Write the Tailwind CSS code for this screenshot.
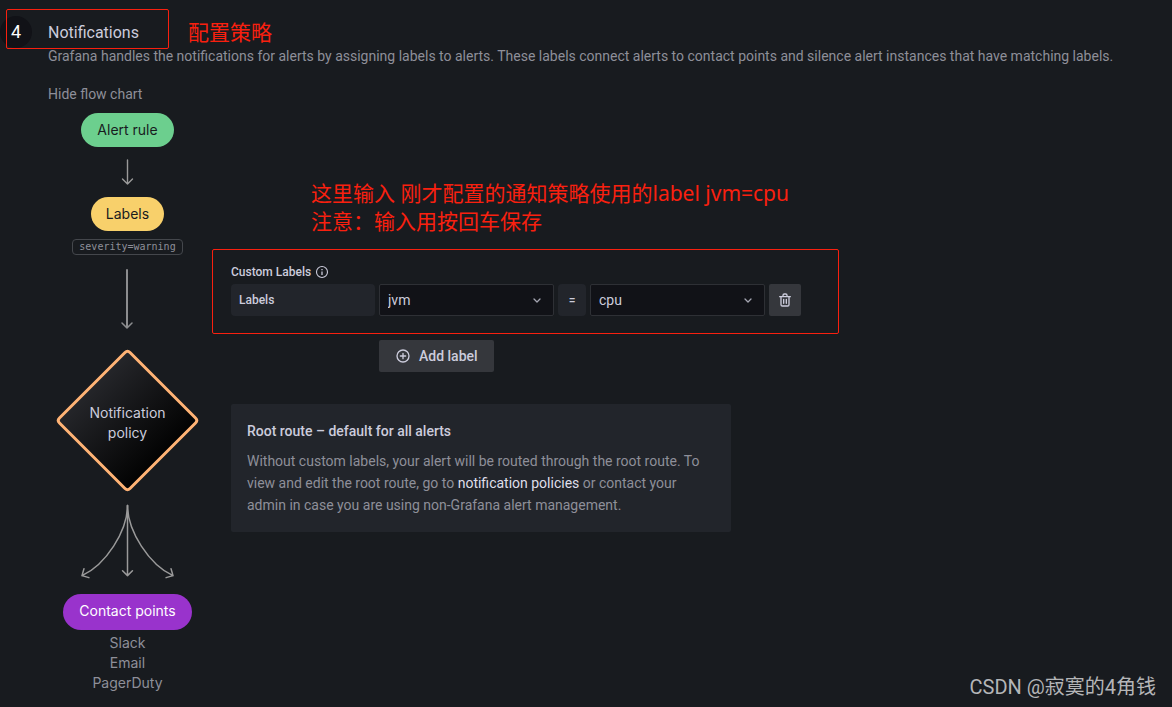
<!DOCTYPE html>
<html lang="en">
  <head>
    <meta charset="UTF-8">
    <meta name="viewport" content="width=device-width, initial-scale=1.0">
    <title>Alert rule - Notifications</title>
    <script src="https://cdn.jsdelivr.net/npm/@tailwindcss/browser@4"></script>
  </head>
  <body class="relative min-h-screen bg-[#181b1f] font-[Roboto,'Noto_Sans_CJK_SC',sans-serif] text-sm text-[#ccccdc]">
    <main class="flex pt-4">
      <!-- Step number -->
      <div class="w-12 shrink-0">
        <div class="flex size-8 items-center justify-center rounded-full bg-[#111217] text-lg text-white">4</div>
      </div>

      <section class="min-w-0 grow pt-1">
        <h2 class="pt-0.5 text-base leading-[22px]">Notifications</h2>
        <p class="text-sm leading-6 text-[#8e8f99]">Grafana handles the notifications for alerts by assigning labels to alerts. These labels connect alerts to contact points and silence alert instances that have matching labels.</p>

        <div class="mt-4 flex gap-6">
          <!-- Flow chart -->
          <div class="flex w-[159px] shrink-0 flex-col items-center">
            <button type="button" class="self-start leading-5 text-[#8e8f99]">Hide flow chart</button>
            <div class="mt-[9px] flex flex-col items-center font-[Inter,sans-serif]">
              <div class="flex h-[34px] items-center rounded-full bg-[#6ccf8e] px-4 text-[#181b1f]">Alert rule</div>
              <svg class="my-3 h-[26px] w-[13px]" viewBox="0 0 13 26" fill="none" stroke="#9a9a9a" stroke-linecap="round" stroke-linejoin="round">
                <path d="M6.500 1V25M1.500 20L6.500 25L11.500 20" stroke-width="1.4" />
              </svg>
              <div class="flex h-[34px] items-center rounded-full bg-[#f8d06b] px-[15px] text-[#181b1f]">Labels</div>
              <div class="mt-2 flex h-4 items-center rounded border border-[#44474c] px-1.5 font-['DejaVu_Sans_Mono',monospace] text-[10px] text-[#8e8f99]">severity=warning</div>
              <svg class="mt-3.5 h-15 w-[13px]" viewBox="0 0 13 60" fill="none" stroke="#8c8d8f" stroke-linecap="round" stroke-linejoin="round">
                <path d="M6 1V58" stroke-width="2" />
                <path d="M1 54L6 59L11 54" stroke-width="1.5" />
              </svg>
              <div class="mt-5 grid size-[143px] place-items-center">
                <svg class="col-start-1 row-start-1 size-[143px]" viewBox="0 0 144 144">
                  <defs>
                    <linearGradient id="policy-fill" x1="36" y1="36" x2="108" y2="108" gradientUnits="userSpaceOnUse">
                      <stop offset="0" stop-color="#25262a" />
                      <stop offset="1" stop-color="#020202" />
                    </linearGradient>
                  </defs>
                  <path d="M69.500 3.500Q72 1 74.500 3.500L140.500 69.500Q143 72 140.500 74.500L74.500 140.500Q72 143 69.500 140.500L3.500 74.500Q1 72 3.500 69.500Z" fill="url(#policy-fill)" stroke="#ffb375" stroke-width="3" />
                </svg>
                <p class="col-start-1 row-start-1 pt-1 text-center leading-5">Notification<br>policy</p>
              </div>
              <svg class="mt-3 h-[76px] w-[95px]" viewBox="0 0 96 76" fill="none" stroke="#9a9a9a" stroke-linecap="round" stroke-linejoin="round" stroke-width="1.5">
                <path d="M48 1V72M43 67L48 72L53 67" />
                <path d="M48 1C48 27 26 61 2 72M4 65L2 72L9 74" />
                <path d="M48 1C48 27 70 61 94 72M92 65L94 72L87 74" />
              </svg>
              <div class="mt-3.5 flex h-9 items-center rounded-full bg-[#9933cc] px-4 pb-0.5 text-white">Contact points</div>
              <ul class="mt-[3px] text-center leading-5 text-[#8e8f99]">
                <li>Slack</li>
                <li>Email</li>
                <li>PagerDuty</li>
              </ul>
            </div>
          </div>

          <!-- Custom labels -->
          <form class="min-w-0 grow pt-[180px]">
            <div class="flex h-4 items-center gap-1 text-xs font-medium">
              Custom Labels
              <svg class="size-3.5" viewBox="0 0 14 14" fill="none" stroke="currentColor">
                <circle cx="7" cy="7" r="5.500" stroke-width="1.100" />
                <path d="M7 6.500V10M7 4V5.200" stroke-width="1.300" />
              </svg>
            </div>
            <div class="mt-1 flex gap-1">
              <label for="label-key" class="flex h-8 w-36 items-center rounded-sm bg-[#22252b] px-2 text-xs font-medium">Labels</label>
              <div class="relative">
                <select id="label-key" class="h-8 w-[175px] appearance-none rounded-xs border border-[#2e3035] bg-[#111217] px-2">
                  <option>jvm</option>
                </select>
                <svg class="pointer-events-none absolute top-2 right-2 size-4" viewBox="0 0 16 16" fill="none" stroke="#a5a6b2" stroke-width="1.300" stroke-linecap="round" stroke-linejoin="round">
                  <path d="M4 7L7 10L10 7" />
                </svg>
              </div>
              <label for="label-value" class="flex h-8 w-7 items-center justify-center rounded-sm bg-[#22252b] text-xs font-medium">=</label>
              <div class="relative">
                <select id="label-value" class="h-8 w-[175px] appearance-none rounded-xs border border-[#2e3035] bg-[#111217] px-2">
                  <option>cpu</option>
                </select>
                <svg class="pointer-events-none absolute top-2 right-2 size-4" viewBox="0 0 16 16" fill="none" stroke="#a5a6b2" stroke-width="1.300" stroke-linecap="round" stroke-linejoin="round">
                  <path d="M4 7L7 10L10 7" />
                </svg>
              </div>
              <button type="button" aria-label="delete label" class="flex size-8 items-center justify-center rounded-xs bg-[#35373c]">
                <svg class="size-4" viewBox="0 0 24 24" fill="currentColor">
                  <path d="M10 18a1 1 0 0 0 1-1v-6a1 1 0 0 0-2 0v6a1 1 0 0 0 1 1ZM20 6h-4V5a3 3 0 0 0-3-3h-2a3 3 0 0 0-3 3v1H4a1 1 0 0 0 0 2h1v11a3 3 0 0 0 3 3h8a3 3 0 0 0 3-3V8h1a1 1 0 0 0 0-2ZM10 5a1 1 0 0 1 1-1h2a1 1 0 0 1 1 1v1h-4Zm7 14a1 1 0 0 1-1 1H8a1 1 0 0 1-1-1V8h10Zm-3-1a1 1 0 0 0 1-1v-6a1 1 0 0 0-2 0v6a1 1 0 0 0 1 1Z" />
                </svg>
              </button>
            </div>
            <button type="button" class="mt-6 ml-[148px] flex h-8 items-center gap-2 rounded-xs bg-[#35373c] px-4 font-medium">
              <svg class="size-4" viewBox="0 0 24 24" fill="currentColor">
                <path d="M12 2a10 10 0 1 0 10 10A10 10 0 0 0 12 2Zm0 18a8 8 0 1 1 8-8 8 8 0 0 1-8 8Zm4-9h-3V8a1 1 0 0 0-2 0v3H8a1 1 0 0 0 0 2h3v3a1 1 0 0 0 2 0v-3h3a1 1 0 0 0 0-2Z" />
              </svg>
              Add label
            </button>

            <div class="mt-8 max-w-[500px] rounded-xs bg-[#22252b] p-4">
              <h3 class="font-medium leading-[22px]">Root route – default for all alerts</h3>
              <p class="mt-2 leading-[22px] text-[#8e8f99]">Without custom labels, your alert will be routed through the root route. To view and edit the root route, go to <a href="#" class="text-[#dfdfea]">notification policies</a> or contact your admin in case you are using non-Grafana alert management.</p>
            </div>
          </form>
        </div>
      </section>
    </main>

    <!-- Red notes over the form -->
    <div class="pointer-events-none absolute top-[9px] left-1.5 h-10 w-[163px] rounded-xs border border-[#f9200f]"></div>
    <div class="pointer-events-none absolute top-[249px] left-[212px] h-[85px] w-[627px] rounded-xs border border-[#f9200f]"></div>
    <p lang="zh-CN" class="absolute top-[18px] left-[188px] font-['Open_Sans','Noto_Sans_CJK_SC',sans-serif] text-[21px] leading-7 text-[#f9200f]">配置策略</p>
    <p lang="zh-CN" class="absolute top-[179px] left-[311px] font-['Noto_Sans','Noto_Sans_CJK_SC',sans-serif] text-[21px] leading-7 text-[#f9200f]">这里输入 刚才配置的通知策略使用的label jvm=cpu<br>注意：输入用按回车保存</p>

    <!-- Watermark -->
    <p lang="zh-CN" class="absolute right-4 bottom-1.5 font-[Roboto,'Noto_Sans_CJK_SC',sans-serif] text-[20px] leading-7 text-[#b4b5b7]">CSDN @寂寞的4角钱</p>
  </body>
</html>
